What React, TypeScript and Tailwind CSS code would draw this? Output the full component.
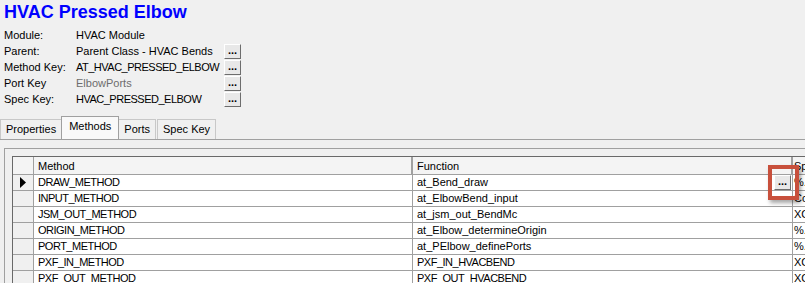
import { useState } from "react";

const info = [
  { label: "Module:", value: "HVAC Module", button: false, dim: false },
  { label: "Parent:", value: "Parent Class - HVAC Bends", button: true, dim: false },
  { label: "Method Key:", value: "AT_HVAC_PRESSED_ELBOW", button: true, dim: false },
  { label: "Port Key", value: "ElbowPorts", button: true, dim: true },
  { label: "Spec Key:", value: "HVAC_PRESSED_ELBOW", button: true, dim: false },
];

const rows = [
  ["DRAW_METHOD", "at_Bend_draw", "%.."],
  ["INPUT_METHOD", "at_ElbowBend_input", "Co.."],
  ["JSM_OUT_METHOD", "at_jsm_out_BendMc", "XC.."],
  ["ORIGIN_METHOD", "at_Elbow_determineOrigin", "%.."],
  ["PORT_METHOD", "at_PElbow_definePorts", "%.."],
  ["PXF_IN_METHOD", "PXF_IN_HVACBEND", "XC.."],
  ["PXF_OUT_METHOD", "PXF_OUT_HVACBEND", "XC.."],
];

const tabs = ["Properties", "Methods", "Ports", "Spec Key"];

// caps-heavy strings run wide in Liberation Sans, pull them in a bit
const caps = (s: string) => (s === s.toUpperCase() ? "tracking-[-0.5px]" : "");

function DotButton({ className = "" }: { className?: string }) {
  return (
    <span
      className={`flex items-end justify-center w-[17px] h-[15px] bg-[#e8e8e8] border border-t-white border-l-white border-r-[#6d6d6d] border-b-[#6d6d6d] text-[11px] leading-[11px] font-bold text-black pb-[2px] ${className}`}
    >
      ...
    </span>
  );
}

export default function App() {
  const [active, setActive] = useState(1);

  return (
    <div className="w-[805px] h-[283px] overflow-hidden bg-[#f0f0f0] text-[11px] text-black font-['Liberation_Sans',Arial,sans-serif]">
      <h1 className="pl-1 pt-[1px] h-6 text-[18px] leading-[22px] font-bold text-[#0000ff]">
        HVAC Pressed Elbow
      </h1>

      <div className="mt-[3px]">
        {info.map((r) => (
          <div key={r.label} className="flex items-center h-4 pl-1">
            <span className="w-[72px]">{r.label}</span>
            <span className={`w-[148px] whitespace-nowrap ${caps(r.value)} ${r.dim ? "text-[#6d6d6d]" : ""}`}>
              {r.value}
            </span>
            {r.button && <DotButton />}
          </div>
        ))}
      </div>

      <div className="mt-[9px] flex items-end h-[23px] gap-[1px]">
        {tabs.map((t, i) =>
          i === active ? (
            <button
              key={t}
              onClick={() => setActive(i)}
              className="relative z-10 h-[23px] -mx-[2px] px-[7px] pb-[4px] bg-[#f9f9f9] border border-b-0 border-[#a0a0a0] text-[11px] leading-[14px]"
            >
              {t}
            </button>
          ) : (
            <button
              key={t}
              onClick={() => setActive(i)}
              className="h-[20px] px-[5px] bg-[#f0f0f0] border border-b-0 border-[#c8c8c8] text-[11px] leading-[14px] pb-[1px]"
            >
              {t}
            </button>
          )
        )}
      </div>

      <div className="border-t border-[#a0a0a0] h-full">
        <div className="ml-1 mt-2 border-l border-t border-[#a0a0a0] pl-[7px] pt-[7px] h-full">
          <div className="relative border-l border-t border-[#696969] w-[820px]">
            <div className="flex h-[18px] bg-[#f4f4f4] border-b border-[#a0a0a0]">
              <div className="w-[21px] border-r border-[#a0a0a0]" />
              <div className="w-[379px] border-r-2 border-[#a0a0a0] pl-[4px] leading-[18px]">Method</div>
              <div className="w-[380px] border-r-2 border-[#a0a0a0] pl-[4px] leading-[18px]">Function</div>
              <div className="flex-1 pl-[1px] leading-[18px]">Spec</div>
            </div>
            {rows.map((r, i) => (
              <div key={r[0]} className="flex h-4 border-b border-[#a0a0a0] bg-white leading-[15px]">
                <div className="w-[21px] bg-[#f0f0f0] border-r border-[#a0a0a0] flex items-center pl-[7px]">
                  {i === 0 && (
                    <svg width="6" height="11" viewBox="0 0 6 11">
                      <path d="M0 0 L6 5.5 L0 11 Z" fill="#000" />
                    </svg>
                  )}
                </div>
                <div className={`w-[379px] border-r border-[#a0a0a0] pl-[4px] ${caps(r[0])}`}>{r[0]}</div>
                <div className={`relative w-[380px] border-r border-[#a0a0a0] pl-[4px] ${caps(r[1])}`}>
                  {r[1]}
                  {i === 0 && <DotButton className="absolute right-[1px] top-0 bg-[#e4e4e4] tracking-normal" />}
                </div>
                <div className="flex-1 pl-[1px]">{r[2]}</div>
              </div>
            ))}
            <div className="absolute left-[755px] top-[8px] w-[31px] h-[35px] border-4 border-[#c8503c] shadow-[2px_3px_4px_rgba(0,0,0,0.35)]" />
          </div>
        </div>
      </div>
    </div>
  );
}
